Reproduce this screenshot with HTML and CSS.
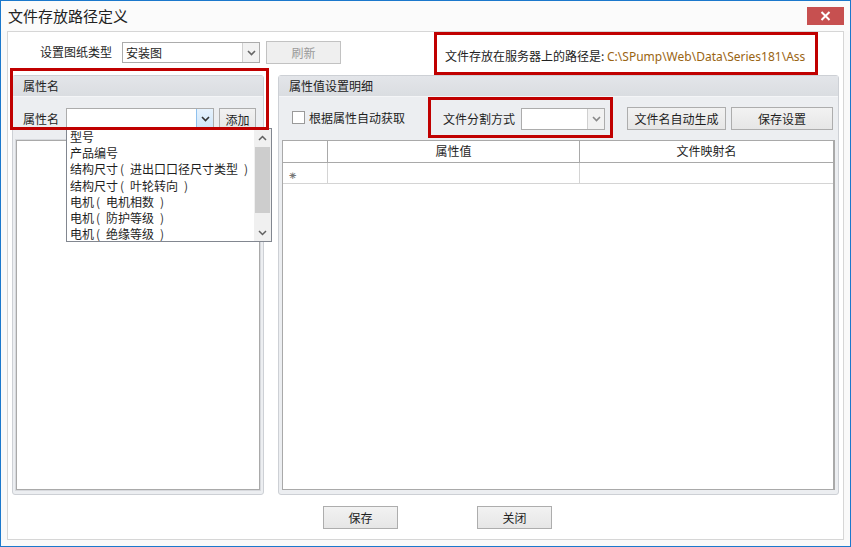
FILE: index.html
```html
<!DOCTYPE html>
<html lang="zh">
<head>
<meta charset="utf-8">
<title>文件存放路径定义</title>
<link rel="stylesheet" href="styles.css">
</head>
<body>
<div class="window">
  <div class="titlebar">
    <span class="title">文件存放路径定义</span>
    <div class="close">
      <svg width="11" height="10" viewBox="0 0 11 10"><path d="M1.5 1 L9.5 9 M9.5 1 L1.5 9" stroke="#fff" stroke-width="2" fill="none"/></svg>
    </div>
  </div>
  <div class="content">
    <div class="toprow">
      <span class="lbl lbl-type">设置图纸类型</span>
      <div class="combo combo-type">
        <span class="combo-text">安装图</span>
        <span class="combo-btn"><svg width="9" height="6" viewBox="0 0 9 6"><path d="M1 1 L4.5 4.5 L8 1" stroke="#666" stroke-width="1.6" fill="none"/></svg></span>
      </div>
      <button class="btn btn-refresh" disabled>刷新</button>
      <div class="pathbox">文件存放在服务器上的路径是: <span class="path">C:\SPump\Web\Data\Series181\Ass</span></div>
    </div>

    <div class="panels">
      <div class="group group-left">
        <div class="group-head">属性名</div>
        <div class="row row-left">
          <span class="lbl">属性名</span>
          <div class="combo combo-attr">
            <span class="combo-text"></span>
            <span class="combo-btn combo-btn-hot"><svg width="9" height="6" viewBox="0 0 9 6"><path d="M1 1 L4.5 4.5 L8 1" stroke="#333" stroke-width="1.6" fill="none"/></svg></span>
          </div>
          <button class="btn btn-add">添加</button>
        </div>
        <div class="listbox"></div>
      </div>

      <div class="group group-right">
        <div class="group-head">属性值设置明细</div>
        <div class="row row-right">
          <span class="check"></span>
          <span class="lbl lbl-check">根据属性自动获取</span>
          <span class="lbl lbl-split">文件分割方式</span>
          <div class="combo combo-split">
            <span class="combo-text"></span>
            <span class="combo-btn"><svg width="9" height="6" viewBox="0 0 9 6"><path d="M1 1 L4.5 4.5 L8 1" stroke="#888" stroke-width="1.6" fill="none"/></svg></span>
          </div>
          <button class="btn btn-auto">文件名自动生成</button>
          <button class="btn btn-savecfg">保存设置</button>
        </div>
        <div class="grid">
          <div class="grid-head">
            <div class="cell c0"></div>
            <div class="cell c1">属性值</div>
            <div class="cell c2">文件映射名</div>
          </div>
          <div class="grid-row">
            <div class="cell c0 marker">⁕</div>
            <div class="cell c1"></div>
            <div class="cell c2"></div>
          </div>
        </div>
      </div>
    </div>

    <div class="footer">
      <button class="btn btn-foot">保存</button>
      <button class="btn btn-foot btn-close">关闭</button>
    </div>

    <div class="popup">
      <ul class="popup-list">
        <li>型号</li>
        <li>产品编号</li>
        <li>结构尺寸<span class="po">(</span>进出口口径尺寸类型<span class="pc">)</span></li>
        <li>结构尺寸<span class="po">(</span>叶轮转向<span class="pc">)</span></li>
        <li>电机<span class="po">(</span>电机相数<span class="pc">)</span></li>
        <li>电机<span class="po">(</span>防护等级<span class="pc">)</span></li>
        <li>电机<span class="po">(</span>绝缘等级<span class="pc">)</span></li>
      </ul>
      <div class="scrollbar">
        <span class="sb-arrow"><svg width="9" height="6" viewBox="0 0 9 6"><path d="M1 5 L4.5 1.5 L8 5" stroke="#606060" stroke-width="1.5" fill="none"/></svg></span>
        <span class="sb-track"><span class="sb-thumb"></span></span>
        <span class="sb-arrow"><svg width="9" height="6" viewBox="0 0 9 6"><path d="M1 1 L4.5 4.5 L8 1" stroke="#606060" stroke-width="1.5" fill="none"/></svg></span>
      </div>
    </div>

    <div class="redbox redbox-attr"></div>
    <div class="redbox redbox-split"></div>
  </div>
</div>
</body>
</html>
```

FILE: styles.css
```css
* { box-sizing: border-box; }
html, body { margin: 0; padding: 0; background: #fff; }
body {
  font-family: "Noto Sans CJK SC", "Noto Sans", sans-serif;
  font-size: 12px;
  color: #1e1e1e;
}
.window {
  width: 851px;
  height: 547px;
  border: 1px solid #1b78cc;
  background: #f9f9f9;
  display: flex;
  flex-direction: column;
}
.titlebar {
  height: 30px;
  display: flex;
  align-items: flex-start;
  padding-left: 7px;
  background: #fbfbfb;
}
.title {
  font-size: 15px;
  line-height: 30px;
  color: #222;
}
.close {
  margin-left: auto;
  margin-top: 6px;
  margin-right: 6px;
  width: 37px;
  height: 18px;
  background: #c75050;
  display: flex;
  align-items: center;
  justify-content: center;
}
.content {
  position: relative;
  flex: 1;
  margin: 0 6px 6px 6px;
  border: 1px solid #d6d6d6;
  background: #fff;
  display: flex;
  flex-direction: column;
}
.lbl { white-space: nowrap; line-height: 21px; }

/* top row */
.toprow {
  height: 43px;
  display: flex;
  align-items: flex-start;
}
.lbl-type { margin-left: 32px; margin-top: 9px; width: 82px; }
.combo {
  display: flex;
  height: 21px;
  border: 1px solid #acacac;
  background: #fff;
}
.combo-text { flex: 1; padding-left: 3px; line-height: 19px; }
.combo-btn {
  width: 17px;
  border-left: 1px solid #d0d0d0;
  background: #f2f2f2;
  display: flex;
  align-items: center;
  justify-content: center;
}
.combo-btn-hot {
  background: linear-gradient(#e6f2fd, #cfe6fb);
  border-left: 1px solid #8fc1ee;
}
.combo-type { width: 138px; margin-top: 10px; }
.btn {
  font-family: inherit;
  font-size: 12px;
  color: #1e1e1e;
  height: 23px;
  padding: 0;
  border: 1px solid #adadad;
  background: linear-gradient(#f2f2f2, #e6e6e6);
}
.btn-refresh {
  width: 75px;
  margin-left: 6px;
  margin-top: 9px;
  color: #9a9a9a;
  border-color: #c2c2c2;
  background: #efefef;
}
.pathbox {
  margin-left: auto;
  margin-right: 25px;
  width: 384px;
  height: 43px;
  border: 3px solid #c00000;
  padding: 1px 0 0 8px;
  line-height: 39px;
  white-space: nowrap;
  overflow: hidden;
  color: #222;
}
.path { font-family: "Noto Sans", sans-serif; font-size: 12px; color: #9a6412; }

/* panels */
.panels {
  height: 420px;
  display: flex;
  padding: 0 3px 0 4px;
  gap: 14px;
}
.group {
  border: 1px solid #cdd0d5;
  border-radius: 3px;
  background: #eceef1;
  display: flex;
  flex-direction: column;
}
.group-left { width: 252px; }
.group-right { width: 561px; }
.group-head {
  height: 21px;
  line-height: 20px;
  padding-left: 10px;
  background: linear-gradient(#e3e5e9, #dadde1);
  border-bottom: 1px solid #f4f5f7;
  color: #222;
}
.row { display: flex; align-items: flex-start; }
.row-left { margin-top: 11px; padding-left: 10px; }
.row-left .lbl { width: 43px; }
.combo-attr { width: 148px; }
.btn-add { width: 37px; height: 22px; margin-left: 5px; }
.listbox {
  margin: 10px 3px 4px 3px;
  flex: 1;
  background: #fff;
  border: 1px solid #a9a9a9;
  box-shadow: 0 0 0 1px #d7d9dd;
}

.row-right { margin-top: 10px; padding-left: 13px; height: 24px; }
.check {
  width: 13px;
  height: 13px;
  border: 1px solid #9a9a9a;
  background: #fff;
  margin-top: 4px;
}
.lbl-check { margin-left: 4px; width: 114px; }
.lbl-split { margin-left: 20px; width: 78px; margin-top: 1px; }
.combo-split { width: 84px; margin-top: 1px; height: 22px; }
.btn-auto { width: 99px; margin-left: 22px; }
.btn-savecfg { width: 102px; margin-left: 5px; }

.grid {
  margin: 9px 3px 4px 3px;
  flex: 1;
  background: #fff;
  border: 1px solid #a9a9a9;
  border-right-width: 2px;
}
.grid-head, .grid-row { display: flex; height: 22px; }
.grid-head { border-bottom: 1px solid #a9a9a9; height: 22px; }
.grid-row { border-bottom: 1px solid #d4d4d4; height: 21px; }
.cell { line-height: 20px; text-align: center; }
.c0 { width: 45px; border-right: 1px solid #a9a9a9; }
.c1 { width: 252px; border-right: 1px solid #a9a9a9; }
.c2 { flex: 1; }
.grid-row .c0, .grid-row .c1 { border-right-color: #d4d4d4; }
.marker { text-align: left; padding-left: 6px; color: #777; font-size: 13px; line-height: 21px; }

/* footer */
.footer { display: flex; padding-left: 315px; margin-top: 11px; }
.btn-foot { width: 75px; height: 23px; }
.btn-close { margin-left: 79px; }

/* popup */
.popup {
  position: absolute;
  left: 58px;
  top: 96px;
  width: 206px;
  height: 114px;
  border: 1px solid #828790;
  background: #fff;
  display: flex;
  z-index: 2;
}
.popup-list {
  list-style: none;
  margin: 0;
  padding: 0 0 0 3px;
  flex: 1;
  overflow: hidden;
}
.popup-list li { height: 16.2px; line-height: 16px; white-space: nowrap; }
.po, .pc { display: inline-block; width: 12px; color: #333; }
.po { text-align: left; padding-left: 2px; }
.pc { text-align: right; padding-right: 2px; }
.scrollbar {
  width: 17px;
  background: #f0f0f0;
  display: flex;
  flex-direction: column;
}
.sb-arrow { height: 17px; display: flex; align-items: center; justify-content: center; }
.sb-track { flex: 1; position: relative; }
.sb-thumb {
  position: absolute;
  left: 1px; right: 1px;
  top: 1px;
  height: 66px;
  background: #cdcdcd;
}

/* annotations */
.redbox {
  position: absolute;
  border: 3px solid #c00000;
  z-index: 3;
}
.redbox-attr { left: 2px; top: 36px; width: 259px; height: 62px; }
.redbox-split { left: 420px; top: 65px; width: 185px; height: 41px; }
```
